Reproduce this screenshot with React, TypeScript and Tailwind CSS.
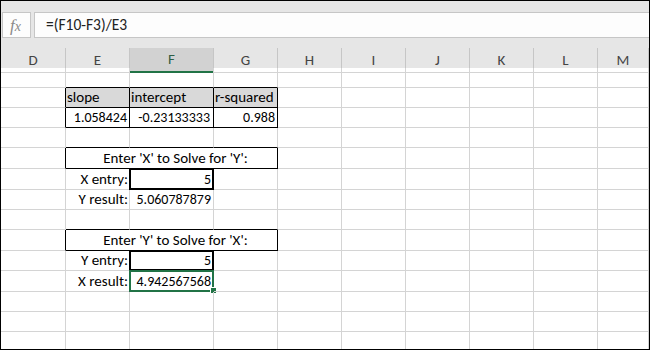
import React from "react";

const FONT = { fontFamily: "Carlito, Calibri, Lato, 'Liberation Sans', sans-serif" };

function Cell({
  cls = "",
  num = false,
  children,
  overlay,
}: {
  cls?: string;
  num?: boolean;
  children?: React.ReactNode;
  overlay?: React.ReactNode;
}) {
  return (
    <div
      className={
        "relative flex items-end whitespace-nowrap border-r border-b border-[#d4d4d4] leading-[19px] text-black " +
        (num ? "text-[14px] " : "text-[15px] ") +
        cls
      }
    >
      {children}
      {overlay}
    </div>
  );
}

const headers = ["D", "E", "F", "G", "H", "I", "J", "K", "L", "M"];

function EmptyRest() {
  return (
    <>
      <Cell />
      <Cell />
      <Cell />
      <Cell />
      <Cell />
      <Cell />
    </>
  );
}

export default function App() {
  return (
    <div
      className="w-[650px] h-[350px] border border-black bg-white overflow-hidden flex flex-col"
      style={FONT}
    >
      {/* top gray bar */}
      <div className="h-[11px] bg-[#e6e6e6] shrink-0" />
      {/* formula bar */}
      <div className="h-[26px] bg-[#e6e6e6] flex shrink-0">
        <div className="ml-[1px] w-[29px] h-full border border-[#c6c6c6] bg-[#fdfdfd] flex items-center justify-center pr-[2px]">
          <span
            className="italic text-[17px] text-[#8a8a8a] leading-none"
            style={{ fontFamily: "'Liberation Serif', serif" }}
          >
            f<span className="text-[14px]">x</span>
          </span>
        </div>
        <div className="ml-[3px] flex-1 h-full border-t border-b border-l border-[#c6c6c6] bg-[#fdfdfd] flex items-center pl-[11px] text-[15.5px] text-[#222]">
          =(F10-F3)/E3
        </div>
      </div>
      <div className="h-[9px] bg-[#e6e6e6] shrink-0" />
      {/* column headers */}
      <div className="h-[21px] shrink-0 grid grid-cols-[65px_64px_84px_64px_64px_64px_64px_64px_64px_51px] bg-[#e6e6e6]">
        {headers.map((h) =>
          h === "F" ? (
            <div
              key={h}
              className="flex items-center justify-center border-r border-[#c6c6c6] border-b-2 border-b-[#217346] bg-[#d2d2d2] text-[15px] text-[#2f5d45] mt-px"
            >
              {h}
            </div>
          ) : (
            <div
              key={h}
              className="flex items-center justify-center border-r border-[#c6c6c6] border-b border-b-[#d4d4d4] text-[15px] text-[#444] mt-px"
            >
              {h}
            </div>
          )
        )}
      </div>
      {/* grid */}
      <div className="flex-1 min-h-0 overflow-hidden">
        <div className="grid grid-cols-[65px_64px_84px_64px_64px_64px_64px_64px_64px_51px] grid-rows-[20px_20px_20px_20px_21px_21px_20px_20px_21px_20px_21px_20px_20px_20px]">
          {/* r1 */}
          <Cell />
          <Cell cls="border-b-black" />
          <Cell cls="border-b-black" />
          <Cell cls="border-b-black" />
          <EmptyRest />
          {/* r2 header */}
          <Cell cls="border-r-black" />
          <Cell cls="border-r-black border-b-black bg-[#d9d9d9] pl-[1px]">slope</Cell>
          <Cell cls="border-r-black border-b-black bg-[#d9d9d9] pl-[1px]">intercept</Cell>
          <Cell cls="border-r-black border-b-black bg-[#d9d9d9] pl-[1px]">r-squared</Cell>
          <EmptyRest />
          {/* r3 values */}
          <Cell cls="border-r-black" />
          <Cell num cls="border-r-black border-b-black justify-end pr-[2px]">1.058424</Cell>
          <Cell num cls="border-r-black border-b-black justify-end pr-[3px]">-0.23133333</Cell>
          <Cell num cls="border-r-black border-b-black justify-end pr-[2px]">0.988</Cell>
          <EmptyRest />
          {/* r4 */}
          <Cell />
          <Cell cls="border-b-black" />
          <Cell cls="border-b-black" />
          <Cell cls="border-b-black" />
          <EmptyRest />
          {/* r5 Enter X */}
          <Cell cls="border-r-black" />
          <Cell cls="col-span-3 border-r-black border-b-black justify-center pl-[8px]">
            Enter 'X' to Solve for 'Y':
          </Cell>
          <EmptyRest />
          {/* r6 X entry */}
          <Cell />
          <Cell cls="justify-end pr-[1px]">X entry:</Cell>
          <Cell
            num
            cls="justify-end pr-[2px]"
            overlay={<div className="absolute -inset-px border-2 border-black" />}
          >
            5
          </Cell>
          <Cell />
          <EmptyRest />
          {/* r7 Y result */}
          <Cell />
          <Cell cls="justify-end pr-[1px]">Y result:</Cell>
          <Cell num cls="justify-end pr-[2px]">5.060787879</Cell>
          <Cell />
          <EmptyRest />
          {/* r8 */}
          <Cell />
          <Cell cls="border-b-black" />
          <Cell cls="border-b-black" />
          <Cell cls="border-b-black" />
          <EmptyRest />
          {/* r9 Enter Y */}
          <Cell cls="border-r-black" />
          <Cell cls="col-span-3 border-r-black border-b-black justify-center pl-[8px]">
            Enter 'Y' to Solve for 'X':
          </Cell>
          <EmptyRest />
          {/* r10 Y entry */}
          <Cell />
          <Cell cls="justify-end pr-[1px]">Y entry:</Cell>
          <Cell
            num
            cls="justify-end pr-[2px]"
            overlay={<div className="absolute -inset-px border-2 border-black" />}
          >
            5
          </Cell>
          <Cell />
          <EmptyRest />
          {/* r11 X result */}
          <Cell />
          <Cell cls="justify-end pr-[1px]">X result:</Cell>
          <Cell
            num
            cls="justify-end pr-[2px]"
            overlay={
              <>
                <div className="absolute -inset-px border-2 border-[#217346]" />
                <div className="absolute right-[-4px] bottom-[-3px] w-[7px] h-[7px] bg-[#217346] border border-white" />
              </>
            }
          >
            4.942567568
          </Cell>
          <Cell />
          <EmptyRest />
          {/* r12-14 */}
          {[0, 1, 2].map((i) => (
            <React.Fragment key={i}>
              <Cell />
              <Cell />
              <Cell />
              <Cell />
              <EmptyRest />
            </React.Fragment>
          ))}
        </div>
      </div>
    </div>
  );
}
